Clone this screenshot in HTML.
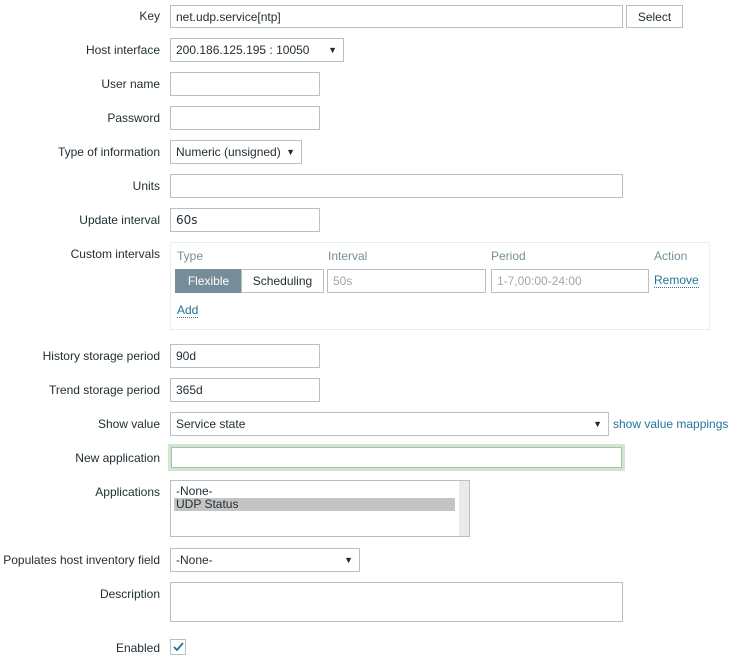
<!DOCTYPE html>
<html><head><style>
body{margin:0;width:729px;height:660px;background:#fff;font-family:"Liberation Sans",Arial,sans-serif;font-size:12px;color:#1f2c33;position:relative;overflow:hidden}
.a{position:absolute;box-sizing:border-box}
.l{position:absolute;right:569px;text-align:right;white-space:nowrap;line-height:14px}
.i{position:absolute;box-sizing:border-box;border:1px solid #b9bfc3;background:#fff;padding-left:5px;line-height:22px;white-space:nowrap}
.s::after{content:"▼";position:absolute;right:6px;top:0;font-size:9px}
.lnk{position:absolute;color:#23749a;border-bottom:1px dotted #23749a;line-height:13px}
.h{position:absolute;color:#768d99;top:249px}
</style></head><body>
<div class="l" style="top:9px">Key</div>
<div class="i" style="left:170px;top:5px;width:453px;height:23px">net.udp.service[ntp]</div>
<div class="i" style="left:626px;top:5px;width:57px;height:23px;text-align:center;padding:0;background:#fff">Select</div>

<div class="l" style="top:43px">Host interface</div>
<div class="i s" style="left:170px;top:38px;width:174px;height:24px">200.186.125.195 : 10050</div>

<div class="l" style="top:77px">User name</div>
<div class="i" style="left:170px;top:72px;width:150px;height:24px"></div>
<div class="l" style="top:111px">Password</div>
<div class="i" style="left:170px;top:106px;width:150px;height:24px"></div>

<div class="l" style="top:145px">Type of information</div>
<div class="i s" style="left:170px;top:140px;width:132px;height:24px">Numeric (unsigned)</div>

<div class="l" style="top:179px">Units</div>
<div class="i" style="left:170px;top:174px;width:453px;height:24px"></div>

<div class="l" style="top:213px">Update interval</div>
<div class="i" style="left:170px;top:208px;width:150px;height:24px;font-family:'DejaVu Sans',sans-serif">60s</div>

<div class="l" style="top:247px">Custom intervals</div>
<div class="a" style="left:170px;top:242px;width:540px;height:88px;border:1px solid #ebeef0"></div>
<div class="h" style="left:177px">Type</div>
<div class="h" style="left:328px">Interval</div>
<div class="h" style="left:491px">Period</div>
<div class="h" style="left:654px">Action</div>
<div class="a" style="left:175px;top:269px;width:67px;height:24px;background:#768d99;color:#fff;text-align:center;line-height:24px">Flexible</div>
<div class="a" style="left:241px;top:269px;width:83px;height:24px;border:1px solid #b9bfc3;text-align:center;line-height:22px">Scheduling</div>
<div class="i" style="left:327px;top:269px;width:159px;height:24px;color:#a0a6aa">50s</div>
<div class="i" style="left:491px;top:269px;width:158px;height:24px;color:#a0a6aa">1-7,00:00-24:00</div>
<div class="lnk" style="left:654px;top:274px">Remove</div>
<div class="lnk" style="left:177px;top:304px">Add</div>

<div class="l" style="top:349px">History storage period</div>
<div class="i" style="left:170px;top:344px;width:150px;height:24px">90d</div>
<div class="l" style="top:383px">Trend storage period</div>
<div class="i" style="left:170px;top:378px;width:150px;height:24px">365d</div>

<div class="l" style="top:417px">Show value</div>
<div class="i s" style="left:170px;top:412px;width:439px;height:24px">Service state</div>
<div class="a" style="left:613px;top:417px;color:#23749a;white-space:nowrap">show value mappings</div>

<div class="l" style="top:451px">New application</div>
<div class="a" style="left:168px;top:444px;width:457px;height:27px;border:3px solid #cfe6d0;background:#fff"><div style="border:1px solid #aebfb0;height:19px"></div></div>

<div class="l" style="top:485px">Applications</div>
<div class="a" style="left:170px;top:480px;width:300px;height:57px;border:1px solid #b9bfc3;line-height:13px;padding:4px 0 0 5px">-None-<br><span style="display:block;background:#c4c4c4;width:279px;margin-left:-2px;padding-left:2px">UDP Status</span></div>
<div class="a" style="left:459px;top:481px;width:10px;height:55px;background:#eaeaea"></div>

<div class="l" style="top:553px">Populates host inventory field</div>
<div class="i s" style="left:170px;top:548px;width:190px;height:24px">-None-</div>

<div class="l" style="top:587px">Description</div>
<div class="i" style="left:170px;top:582px;width:453px;height:40px"></div>

<div class="l" style="top:641px">Enabled</div>
<div class="a" style="left:170px;top:639px;width:16px;height:16px;border:1px solid #b9bfc3">
<svg width="14" height="14" viewBox="0 0 14 14"><path d="M3 7l3 3 6-7" fill="none" stroke="#23749a" stroke-width="1.8"/></svg></div>
</body></html>
